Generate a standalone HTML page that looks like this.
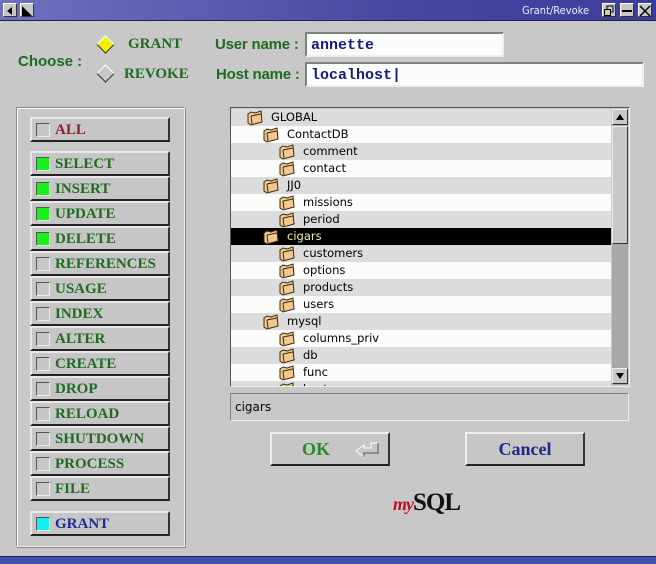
<!DOCTYPE html>
<html><head><meta charset="utf-8"><style>
*{box-sizing:border-box;margin:0;padding:0}
body{width:656px;height:564px;background:#c8c8c8;position:relative;overflow:hidden;font-family:"Liberation Serif",serif}
.abs{position:absolute}
.title{left:0;top:0;width:656px;height:21px;background:linear-gradient(90deg,#7070c0,#4848a0 60%,#3c3c9c);border-bottom:1px solid #202050}
.tb{top:3px;width:14px;height:14px;background:#c8c8c8;border:1px solid #fff;border-right-color:#333;border-bottom-color:#333}
.lbl{color:#1f6b1f;font-weight:bold;font-size:15px;font-family:"Liberation Sans",sans-serif}
.ent{background:#fbfdfb;border:2px solid #808080;border-right-color:#eee;border-bottom-color:#eee;font-family:"Liberation Mono",monospace;font-weight:bold;color:#1a1a7a;font-size:15px;padding:3px 4px;line-height:17px}
.btn{left:30px;width:140px;height:25px;background:#c6c6c6;border:2px solid #e8e8e8;border-right-color:#333;border-bottom-color:#222;font-weight:bold;font-size:15px;color:#1f6b1f;padding-left:23px;line-height:22px}
.btn i{position:absolute;left:4px;top:4px;width:14px;height:14px;border:1px solid #555;border-right-color:#eee;border-bottom-color:#eee;background:#c6c6c6}
.btn i.on{background:#18f018}
.row{left:0;width:380px;height:17px;font-family:"DejaVu Sans",sans-serif;font-size:11.5px;line-height:17px}
.row svg{position:absolute;top:1px}
.row span{position:absolute}
.pb{height:34px;background:#c6c6c6;border:2px solid #eee;border-right-color:#333;border-bottom-color:#222;font-weight:bold;font-size:18px;text-align:center;line-height:30px}
.dia{width:13px;height:13px;transform:rotate(45deg);border:1px solid #333;border-top-color:#fff;border-left-color:#fff}
</style></head><body>
<div class="abs title"></div>
<div class="abs tb" style="left:3px"><svg width="12" height="12"><path d="M8 2L3 6L8 10Z" fill="#000"/></svg></div>
<div class="abs tb" style="left:20px"><svg width="12" height="12"><path d="M1 1L11 11H1Z" fill="#000"/></svg></div>
<div class="abs" style="left:522px;top:4px;color:#eef;font-family:'DejaVu Sans Condensed','DejaVu Sans',sans-serif;font-size:11px">Grant/Revoke</div>
<div class="abs tb" style="left:602px"><svg width="12" height="12"><rect x="4" y="1" width="6" height="6" fill="none" stroke="#000"/><rect x="1.5" y="4.5" width="6" height="6" fill="#c8c8c8" stroke="#000"/></svg></div>
<div class="abs tb" style="left:620px"><svg width="12" height="12"><rect x="1" y="5" width="10" height="2" fill="#000"/></svg></div>
<div class="abs tb" style="left:638px"><svg width="12" height="12"><path d="M1 1L11 11M11 1L1 11" stroke="#000" stroke-width="1.5"/></svg></div>

<div class="abs lbl" style="left:18px;top:53px">Choose :</div>
<div class="abs dia" style="left:99px;top:38px;background:#f0f000"></div>
<div class="abs lbl" style="left:128px;top:36px;font-family:'Liberation Serif',serif;font-size:15px">GRANT</div>
<div class="abs dia" style="left:99px;top:67px;background:#c8c8c8"></div>
<div class="abs lbl" style="left:124px;top:66px;font-family:'Liberation Serif',serif;font-size:15px">REVOKE</div>
<div class="abs lbl" style="left:215px;top:36px;letter-spacing:-0.2px">User name :</div>
<div class="abs lbl" style="left:216px;top:66px;letter-spacing:-0.2px">Host name :</div>
<div class="abs ent" style="left:305px;top:32px;width:199px;height:25px">annette</div>
<div class="abs ent" style="left:305px;top:62px;width:339px;height:25px">localhost|</div>

<div class="abs" style="left:16px;top:107px;width:169px;height:440px;border:1px solid #eee;border-top-color:#888;border-left-color:#888;box-shadow:inset 1px 1px 0 #fff,1px 1px 0 #888"></div>
<div class="abs btn" style="top:117px;color:#8b2030"><i></i>ALL</div>
<div class="abs btn" style="top:151px"><i class="on"></i>SELECT</div>
<div class="abs btn" style="top:176px"><i class="on"></i>INSERT</div>
<div class="abs btn" style="top:201px"><i class="on"></i>UPDATE</div>
<div class="abs btn" style="top:226px"><i class="on"></i>DELETE</div>
<div class="abs btn" style="top:251px"><i></i>REFERENCES</div>
<div class="abs btn" style="top:276px"><i></i>USAGE</div>
<div class="abs btn" style="top:301px"><i></i>INDEX</div>
<div class="abs btn" style="top:326px"><i></i>ALTER</div>
<div class="abs btn" style="top:351px"><i></i>CREATE</div>
<div class="abs btn" style="top:376px"><i></i>DROP</div>
<div class="abs btn" style="top:401px"><i></i>RELOAD</div>
<div class="abs btn" style="top:426px"><i></i>SHUTDOWN</div>
<div class="abs btn" style="top:451px"><i></i>PROCESS</div>
<div class="abs btn" style="top:476px"><i></i>FILE</div>
<div class="abs btn" style="top:511px;color:#1a2a9a"><i style="background:#10f0f0"></i>GRANT</div>

<div class="abs" style="left:230px;top:107px;width:400px;height:280px;border:1px solid #555;border-right-color:#eee;border-bottom-color:#eee;background:#c8c8c8;overflow:hidden" id="tree">
<svg width="0" height="0" style="position:absolute"><defs><g id="f"><path d="M1 4L4 2L8 3L14 1L15 12L4 15L1 13Z" fill="#f0c890" stroke="#3a2a10"/><path d="M4 6L14 4M4 6L5 14" stroke="#3a2a10" fill="none"/></g></defs></svg>
</div>
<div class="abs" style="left:612px;top:109px;width:16px;height:276px;background:#a8a8a8"></div>
<div class="abs" style="left:612px;top:109px;width:16px;height:16px;background:#c8c8c8;border:1px solid #eee;border-right-color:#333;border-bottom-color:#333"><svg width="14" height="14"><path d="M3 10L7 4L11 10Z" fill="#000"/></svg></div>
<div class="abs" style="left:612px;top:126px;width:16px;height:118px;background:#c8c8c8;border:1px solid #eee;border-right-color:#333;border-bottom-color:#333"></div>
<div class="abs" style="left:612px;top:368px;width:16px;height:16px;background:#c8c8c8;border:1px solid #eee;border-right-color:#333;border-bottom-color:#333"><svg width="14" height="14"><path d="M3 4L7 10L11 4Z" fill="#000"/></svg></div>

<div class="abs ent" style="left:230px;top:393px;width:399px;height:28px;background:#c8c8c8;font-family:'DejaVu Sans',sans-serif;font-weight:normal;color:#000;font-size:12px;padding:5px 4px;border-width:1px">cigars</div>

<div class="abs pb" style="left:270px;top:432px;width:120px;color:#2a8a2a;text-align:left;padding-left:30px">OK<svg style="position:absolute;left:82px;top:7px" width="28" height="18"><path d="M10 4L2 10L10 16V12H24V2H17V7H10Z" fill="none" stroke="#fff"/><path d="M10 16V12H24V2" fill="none" stroke="#555"/></svg></div>
<div class="abs pb" style="left:465px;top:432px;width:120px;color:#1a2a8a">Cancel</div>

<div class="abs" style="left:393px;top:489px;font-family:'Liberation Serif',serif;font-weight:bold;font-size:25px;color:#111;letter-spacing:-1px;line-height:28px"><span style="color:#c01020;font-style:italic;font-size:18px">my</span>SQL</div>

<div class="abs" style="left:0;top:556px;width:656px;height:8px;background:#4050a8;border-top:1px solid #202050"></div>

<script>
var rows=[["GLOBAL",0],["ContactDB",1],["comment",2],["contact",2],["JJ0",1],["missions",2],["period",2],["cigars",1],["customers",2],["options",2],["products",2],["users",2],["mysql",1],["columns_priv",2],["db",2],["func",2],["host",2]];
var t=document.getElementById('tree'),h='';
rows.forEach(function(r,i){var sel=r[0]=="cigars";var bg=sel?"#000":(i%2?"#fcfcfa":"#dcdcdc");
var x=16+r[1]*16;
h+='<div class="abs row" style="top:'+(1+i*17)+'px;background:'+bg+';color:'+(sel?'#f0f0a0':'#000')+'"><svg style="left:'+x+'px" width="16" height="16"><use href="#f"/></svg><span style="left:'+(x+24)+'px">'+r[0]+'</span></div>';});
t.insertAdjacentHTML('beforeend',h);
</script>
</body></html>
